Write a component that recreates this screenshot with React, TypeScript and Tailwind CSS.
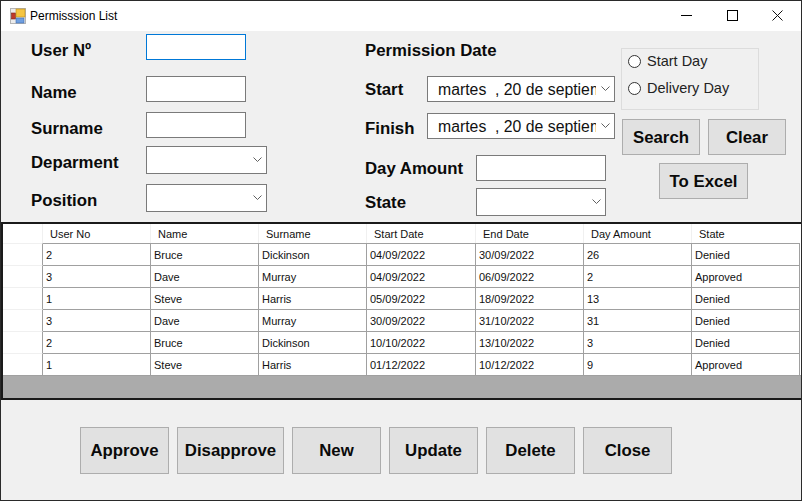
const font = "font-['Liberation_Sans',Arial,sans-serif]";
const label = "text-[16.8px] leading-[20px] font-bold text-[#0a0a0a] whitespace-nowrap";
const inputCls = "h-[26px] border border-[#7a7a7a] bg-white";
const btn = "flex items-center justify-center bg-[#e1e1e1] border border-[#adadad] text-[16.8px] font-bold text-[#0a0a0a] whitespace-nowrap";

function Chevron({ className = "" }: { className?: string }) {
  return (
    <svg width="9" height="6" viewBox="0 0 9 6" className={className} fill="none" stroke="#606060" strokeWidth="1">
      <path d="M0.5 0.5 L4.5 4.5 L8.5 0.5" />
    </svg>
  );
}

function Select({ w }: { w: string }) {
  return (
    <div className={`${w} h-[28px] border border-[#7a7a7a] bg-white flex items-center justify-end pr-[4px]`}>
      <Chevron />
    </div>
  );
}

function DatePick() {
  return (
    <div className="w-[188px] h-[26px] border border-[#7a7a7a] bg-white flex items-center pl-[10px] pr-[4px] overflow-hidden">
      <span className="w-[158px] pt-[1px] overflow-hidden whitespace-pre text-[15.8px] text-[#111]">martes  , 20 de septiembre de 2022</span>
      <Chevron className="ml-auto shrink-0" />
    </div>
  );
}

function Radio({ text }: { text: string }) {
  return (
    <div className="flex items-center gap-[6px] h-[14px]">
      <span className="w-[13px] h-[13px] rounded-full border border-[#333] bg-white relative -top-[1px]" />
      <span className="text-[14.5px] text-[#222] whitespace-nowrap">{text}</span>
    </div>
  );
}

const cols = ["User No", "Name", "Surname", "Start Date", "End Date", "Day Amount", "State"];
const rows = [
  ["2", "Bruce", "Dickinson", "04/09/2022", "30/09/2022", "26", "Denied"],
  ["3", "Dave", "Murray", "04/09/2022", "06/09/2022", "2", "Approved"],
  ["1", "Steve", "Harris", "05/09/2022", "18/09/2022", "13", "Denied"],
  ["3", "Dave", "Murray", "30/09/2022", "31/10/2022", "31", "Denied"],
  ["2", "Bruce", "Dickinson", "10/10/2022", "13/10/2022", "3", "Denied"],
  ["1", "Steve", "Harris", "01/12/2022", "10/12/2022", "9", "Approved"],
];
const gridCols = "grid grid-cols-[40px_108px_108px_108px_109px_108px_108px_108px]";

export default function App() {
  return (
    <div className={`${font} w-[802px] h-[501px] bg-[#f0f0f0] border border-[#2a2a2a] flex flex-col overflow-hidden`}>
      {/* title bar */}
      <div className="h-[30px] shrink-0 bg-white flex items-center">
        <svg width="16" height="16" viewBox="0 0 16 16" className="ml-[9px]">
          <rect x="0.5" y="0.5" width="15" height="15" fill="#ececec" stroke="#b5b5b5" />
          <rect x="1.5" y="5" width="4" height="6" fill="#c0392b" stroke="#7a1f16" strokeWidth="0.6" />
          <rect x="6" y="1" width="9" height="8" fill="#f5c542" stroke="#b98a1c" strokeWidth="0.6" />
          <rect x="6" y="10" width="8" height="5" fill="#6f9fe0" stroke="#3f6db0" strokeWidth="0.6" />
        </svg>
        <span className="ml-[4px] text-[12px] text-black">Permisssion List</span>
        <div className="ml-auto flex items-center h-full pr-[2px] pb-[1px]">
          <div className="w-[45px] flex justify-center">
            <div className="w-[11px] h-px bg-black" />
          </div>
          <div className="w-[46px] flex justify-center">
            <div className="w-[11px] h-[11px] border border-black" />
          </div>
          <div className="w-[44px] flex justify-center">
            <svg width="11" height="11" viewBox="0 0 11 11" stroke="#111" strokeWidth="1">
              <path d="M0.5 0.5 L10.5 10.5 M10.5 0.5 L0.5 10.5" />
            </svg>
          </div>
        </div>
      </div>

      {/* form */}
      <div className="h-[191px] shrink-0 flex">
        {/* column 1 */}
        <div className="w-[364px] pl-[30px] pt-[3px] shrink-0">
          <div className="flex items-center">
            <span className={`${label} w-[115px] relative top-[4px]`}>User Nº</span>
            <div className="w-[100px] h-[26px] border border-[#0078d7] bg-white" />
          </div>
          <div className="flex items-center mt-[16px]">
            <span className={`${label} w-[115px] relative top-[4px]`}>Name</span>
            <div className={`${inputCls} w-[100px]`} />
          </div>
          <div className="flex items-center mt-[10px]">
            <span className={`${label} w-[115px] relative top-[4px]`}>Surname</span>
            <div className={`${inputCls} w-[100px]`} />
          </div>
          <div className="flex items-center mt-[8px]">
            <span className={`${label} w-[115px] relative top-[3px]`}>Deparment</span>
            <Select w="w-[121px]" />
          </div>
          <div className="flex items-center mt-[10px]">
            <span className={`${label} w-[115px] relative top-[3px]`}>Position</span>
            <Select w="w-[121px]" />
          </div>
        </div>

        {/* column 2 */}
        <div className="w-[256px] shrink-0">
          <div className={`${label} mt-[10px]`}>Permission Date</div>
          <div className="flex items-center mt-[15px]">
            <span className={`${label} w-[62px] relative top-[1px]`}>Start</span>
            <DatePick />
          </div>
          <div className="flex items-center mt-[11px]">
            <span className={`${label} w-[62px] relative top-[3px]`}>Finish</span>
            <DatePick />
          </div>
          <div className="flex items-center mt-[16px]">
            <span className={`${label} w-[111px] relative top-[1px]`}>Day Amount</span>
            <div className={`${inputCls} w-[130px]`} />
          </div>
          <div className="flex items-center mt-[7px]">
            <span className={`${label} w-[111px] relative top-[1px]`}>State</span>
            <Select w="w-[130px]" />
          </div>
        </div>

        {/* column 3 */}
        <div className="flex-1 pt-[17px]">
          <div className="w-[138px] h-[62px] border border-[#dcdcdc] pl-[6px] pt-[6px] flex flex-col gap-[13px]">
            <Radio text="Start Day" />
            <Radio text="Delivery Day" />
          </div>
          <div className="flex gap-[8px] mt-[9px] ml-[1px]">
            <div className={`${btn} w-[78px] h-[36px] pt-[2px]`}>Search</div>
            <div className={`${btn} w-[78px] h-[36px] pt-[2px]`}>Clear</div>
          </div>
          <div className={`${btn} w-[89px] h-[36px] mt-[8px] ml-[38px] pt-[2px]`}>To Excel</div>
        </div>
      </div>

      {/* table */}
      <div className="h-[178px] shrink-0 border-2 border-[#1a1a1a] border-r-0 bg-[#ababab] overflow-hidden text-[11px] text-[#111]">
        <div className={`${gridCols} h-[19px] bg-white`}>
          <div className="border-r border-[#f0f0f0]" />
          {cols.map((c, i) => (
            <div key={c} className={`flex items-center pl-[7px] pt-[2px] ${i < cols.length - 1 ? "border-r border-[#f0f0f0]" : ""}`}>{c}</div>
          ))}
        </div>
        <div className="border-b border-[#a0a0a0]">
          {rows.map((r, i) => (
            <div key={i} className={`${gridCols} h-[22px] bg-white`}>
              <div className="border-r border-[#a0a0a0] border-t border-t-[#f0f0f0]" />
              {r.map((c, j) => (
                <div key={j} className="flex items-center pl-[3px] pt-[2px] border-t border-r border-[#a0a0a0]">{c}</div>
              ))}
            </div>
          ))}
        </div>
      </div>

      {/* bottom buttons */}
      <div className="flex gap-[8px] pl-[79px] pt-[27px]">
        <div className={`${btn} w-[89px] h-[47px]`}>Approve</div>
        <div className={`${btn} w-[107px] h-[47px]`}>Disapprove</div>
        <div className={`${btn} w-[89px] h-[47px]`}>New</div>
        <div className={`${btn} w-[89px] h-[47px]`}>Update</div>
        <div className={`${btn} w-[89px] h-[47px]`}>Delete</div>
        <div className={`${btn} w-[89px] h-[47px]`}>Close</div>
      </div>
    </div>
  );
}
